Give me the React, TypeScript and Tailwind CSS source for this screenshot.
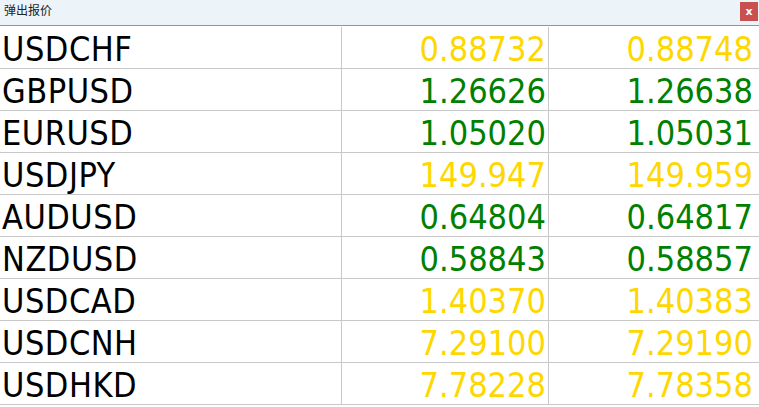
import React from 'react'

type Quote = { symbol: string; bid: string; ask: string; up: boolean }

const quotes: Quote[] = [
  { symbol: 'USDCHF', bid: '0.88732', ask: '0.88748', up: false },
  { symbol: 'GBPUSD', bid: '1.26626', ask: '1.26638', up: true },
  { symbol: 'EURUSD', bid: '1.05020', ask: '1.05031', up: true },
  { symbol: 'USDJPY', bid: '149.947', ask: '149.959', up: false },
  { symbol: 'AUDUSD', bid: '0.64804', ask: '0.64817', up: true },
  { symbol: 'NZDUSD', bid: '0.58843', ask: '0.58857', up: true },
  { symbol: 'USDCAD', bid: '1.40370', ask: '1.40383', up: false },
  { symbol: 'USDCNH', bid: '7.29100', ask: '7.29190', up: false },
  { symbol: 'USDHKD', bid: '7.78228', ask: '7.78358', up: false },
]

const font = { fontFamily: '"DejaVu Sans Condensed", "DejaVu Sans", sans-serif' }

export default function App() {
  return (
    <div className="w-[759px] h-[407px] bg-white overflow-hidden">
      {/* ── Title bar ── */}
      <div className="h-[25px] bg-[#ecf3f9] flex items-start justify-between pl-1 pr-[1px]">
        <span className="mt-[4px] text-[12px] text-[#222] font-['Noto_Sans_CJK_SC',sans-serif] leading-none">弹出报价</span>
        <button className="w-[18px] h-[19px] mt-[2px] bg-[#c8504f] text-white text-[11px] font-bold leading-none flex items-center justify-center font-['DejaVu_Sans',sans-serif]">
          x
        </button>
      </div>
      <div className="h-[1px] bg-[#8e959c]" />
      <div className="h-[1px] bg-white" />

      {/* ── Quotes ── */}
      <div className="grid grid-cols-[342px_207px_1fr]" style={font}>
        {quotes.map((q) => {
          const color = q.up ? 'text-[#008000]' : 'text-[#ffd700]'
          return (
            <React.Fragment key={q.symbol}>
              <div className="h-[42px] border-b border-r border-[#c8c8c8] flex items-center pt-[3px] pl-[2px] text-[34px] text-black leading-none tracking-[0.5px]">
                {q.symbol}
              </div>
              <div className={`h-[42px] border-b border-r border-[#c8c8c8] flex items-center justify-end pt-[3px] pr-[2px] text-[34px] leading-none ${color}`}>
                {q.bid}
              </div>
              <div className={`h-[42px] border-b border-[#c8c8c8] flex items-center justify-end pt-[3px] pr-[6px] text-[34px] leading-none ${color}`}>
                {q.ask}
              </div>
            </React.Fragment>
          )
        })}
      </div>
    </div>
  )
}
